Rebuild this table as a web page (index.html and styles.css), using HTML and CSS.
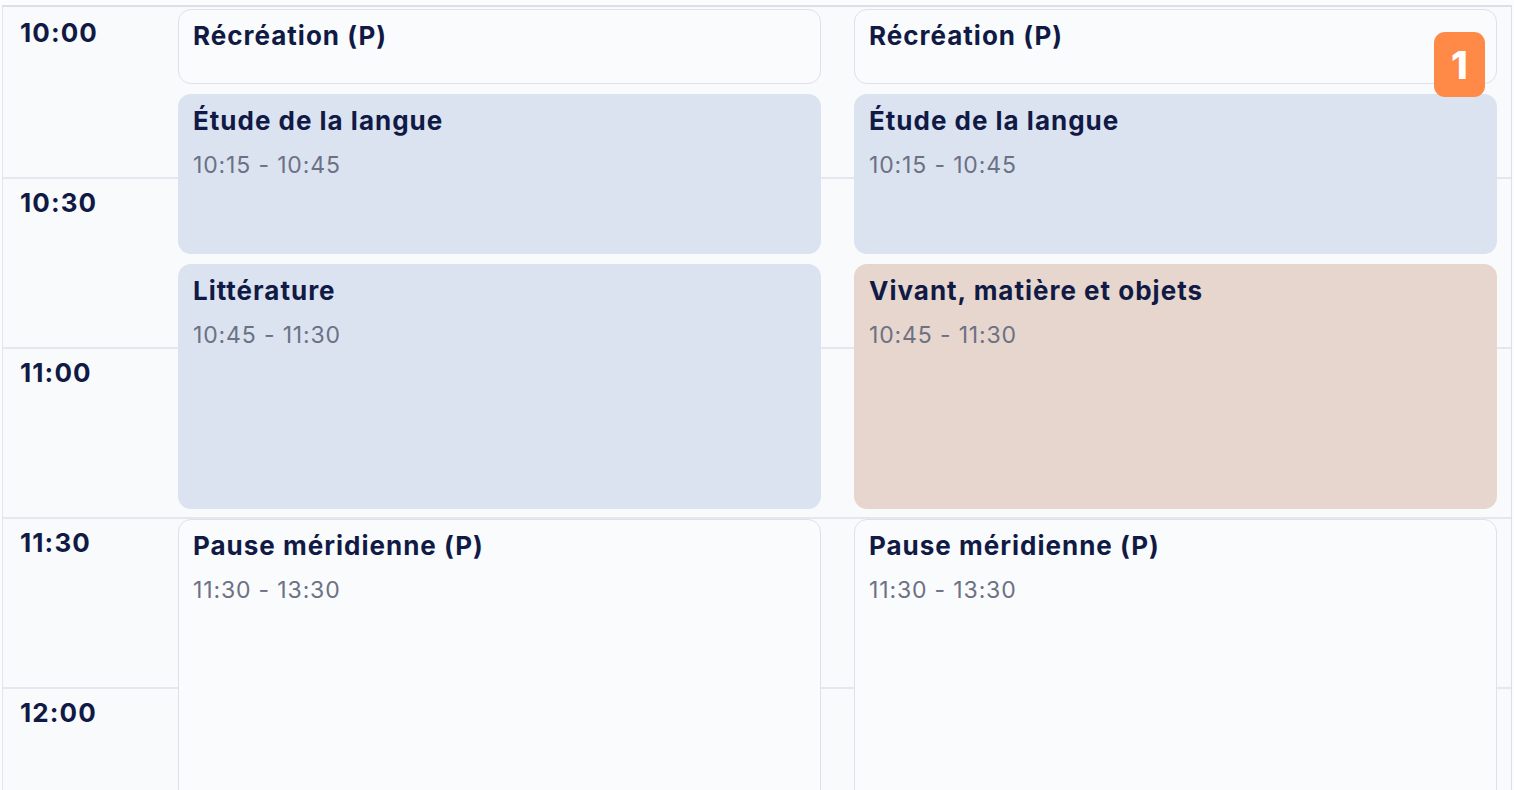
FILE: index.html
```html
<!DOCTYPE html>
<html lang="fr">
<head>
<meta charset="utf-8">
<title>Emploi du temps</title>
<link rel="stylesheet" href="styles.css">
</head>
<body>
<div class="frame">
  <div class="grid">
    <div class="hline r1"></div>
    <div class="hline r3"></div>
    <div class="hline r5"></div>
    <div class="hline r7"></div>
    <div class="hline r9"></div>

    <div class="time r1">10:00</div>
    <div class="time r3">10:30</div>
    <div class="time r5">11:00</div>
    <div class="time r7">11:30</div>
    <div class="time r9">12:00</div>

    <div class="event plain c1 s1 e2">
      <div class="title">Récréation (P)</div>
    </div>
    <div class="event blue c1 s2 e4">
      <div class="title">Étude de la langue</div>
      <div class="range">10:15 - 10:45</div>
    </div>
    <div class="event blue c1 s4 e7">
      <div class="title">Littérature</div>
      <div class="range">10:45 - 11:30</div>
    </div>
    <div class="event plain c1 s7 open">
      <div class="title">Pause méridienne (P)</div>
      <div class="range">11:30 - 13:30</div>
    </div>

    <div class="event plain c2 s1 e2">
      <div class="title">Récréation (P)</div>
    </div>
    <div class="event blue c2 s2 e4">
      <div class="title">Étude de la langue</div>
      <div class="range">10:15 - 10:45</div>
    </div>
    <div class="event sand c2 s4 e7">
      <div class="title">Vivant, matière et objets</div>
      <div class="range">10:45 - 11:30</div>
    </div>
    <div class="event plain c2 s7 open">
      <div class="title">Pause méridienne (P)</div>
      <div class="range">11:30 - 13:30</div>
    </div>
  </div>
  <div class="badge">1</div>
</div>
</body>
</html>
```
FILE: styles.css
```css
html, body {
  margin: 0;
  padding: 0;
  height: 100%;
  overflow: hidden;
  background: #fbfcfd;
}

body {
  font-family: Inter, "Noto Sans", "Liberation Sans", sans-serif;
  color: #101a45;
}

.frame {
  position: relative;
  margin: 5px 2px 0 2px;
  border-top: 2px solid #dcdfe6;
  border-left: 1px solid #e2e5eb;
  border-right: 1px solid #dcdfe6;
  background: #f9fafc;
  height: 783px;
  overflow: hidden;
}

.grid {
  display: grid;
  grid-template-columns: 175px 643px 33px 643px 1fr;
  grid-template-rows: repeat(10, 85px);
}

.hline {
  grid-column: 1 / -1;
  grid-row-end: span 2;
  border-top: 2px solid #e4e7ed;
}
.hline.r1 { border-top-color: transparent; }

.r1 { grid-row-start: 1; }
.r3 { grid-row-start: 3; }
.r5 { grid-row-start: 5; }
.r7 { grid-row-start: 7; }
.r9 { grid-row-start: 9; }

.time {
  grid-column: 1;
  grid-row-end: span 2;
  padding: 11px 0 0 17px;
  font-size: 26px;
  font-weight: 750;
  line-height: 30px;
  letter-spacing: 1.1px;
}

.c1 { grid-column: 2; }
.c2 { grid-column: 4; }
.s1 { grid-row-start: 1; }
.s2 { grid-row-start: 2; }
.s4 { grid-row-start: 4; }
.s7 { grid-row-start: 7; }
.e2 { grid-row-end: 2; }
.e4 { grid-row-end: 4; }
.e7 { grid-row-end: 7; }
.open { grid-row-end: 11; }

.event {
  margin: 2px 0 8px 0;
  border-radius: 13px;
  padding: 11px 15px;
  box-sizing: border-box;
  overflow: hidden;
}

.plain {
  background: #fafbfc;
  border: 1.5px solid #dde1e8;
  padding: 10px 14px;
}
.blue { background: #dbe3f1; }
.sand { background: #e6d6cd; }

.title {
  font-size: 26px;
  font-weight: 650;
  line-height: 32px;
  letter-spacing: 1px;
}

.range {
  margin-top: 14px;
  font-size: 23px;
  font-weight: 400;
  line-height: 28px;
  color: #6c7184;
  letter-spacing: 0.85px;
}

.badge {
  position: absolute;
  top: 25px;
  left: 1431px;
  width: 51px;
  height: 65px;
  border-radius: 11px;
  background: #ff8a48;
  color: #ffffff;
  font-size: 38px;
  font-weight: 800;
  display: flex;
  align-items: center;
  justify-content: center;
}
```
